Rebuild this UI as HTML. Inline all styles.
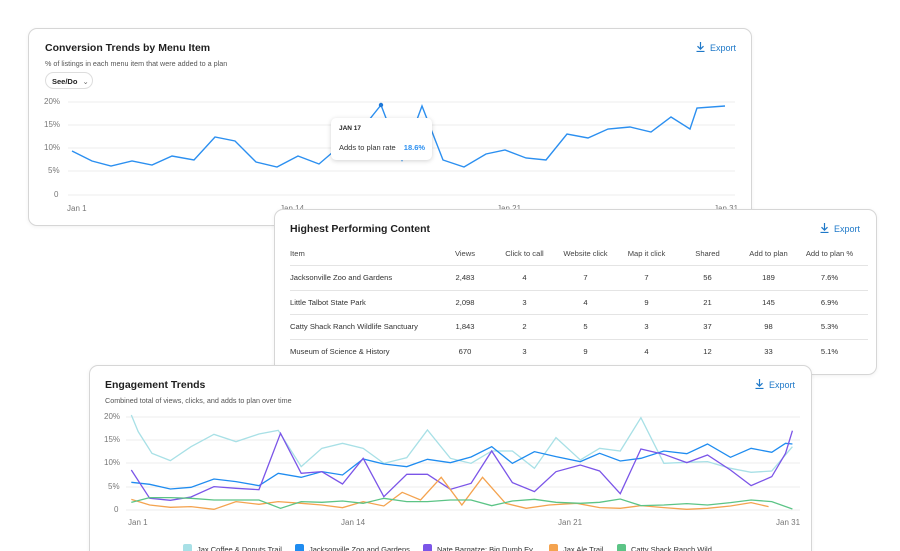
<!DOCTYPE html>
<html><head><meta charset="utf-8"><style>
*{margin:0;padding:0;box-sizing:border-box}
html,body{width:900px;height:551px;overflow:hidden}
body{background:#fff;position:relative;font-family:"Liberation Sans",sans-serif;color:#222}
.card{position:absolute;background:#fff;border:1px solid #d6d6d6;border-radius:9px;box-shadow:0 1px 4px rgba(0,0,0,.06)}
.t{position:absolute;font-size:10.5px;font-weight:bold;color:#1f1f1f;white-space:nowrap}
.s{position:absolute;font-size:7.2px;color:#555;white-space:nowrap}
.exp{position:absolute;font-size:9px;color:#1e78c8;white-space:nowrap}
.exp svg{vertical-align:-1px;margin-right:5px}
.ax{position:absolute;font-size:8px;color:#777;white-space:nowrap}
table{position:absolute;border-collapse:collapse;font-size:7.6px;color:#333;table-layout:fixed}
td,th{font-weight:normal;height:24.5px;text-align:center;border-bottom:1px solid #e4e4e4;white-space:nowrap}
tr:last-child td{border-bottom:none}
th{color:#444}
.l{text-align:left}
</style></head><body>

<div class="card" style="left:28px;top:28px;width:724px;height:198px">
<div class="t" style="left:16px;top:13px">Conversion Trends by Menu Item</div>
<div class="s" style="left:16px;top:30px">% of listings in each menu item that were added to a plan</div>
<div style="position:absolute;left:16px;top:43px;width:48px;height:17px;border:1px solid #ddd;border-radius:9px;font-size:7.5px;font-weight:bold;padding:4px 0 0 6px">See/Do <span style="font-weight:normal;color:#666;margin-left:3px">&#8964;</span></div>
<div class="exp" style="left:667px;top:13px"><svg width="9" height="10" viewBox="0 0 9 10"><path d="M4.5 0v7M1.5 4.2l3 3 3-3M0.5 9.5h8" stroke="#1e78c8" stroke-width="1.2" fill="none"/></svg>Export</div>
</div>
<div class="ax" style="left:44px;top:97px">20%</div>
<div class="ax" style="left:44px;top:120px">15%</div>
<div class="ax" style="left:44px;top:143px">10%</div>
<div class="ax" style="left:48px;top:166px">5%</div>
<div class="ax" style="left:54px;top:190px">0</div>
<div class="ax" style="left:67px;top:204px">Jan 1</div>
<div class="ax" style="left:280px;top:204px">Jan 14</div>
<div class="ax" style="left:497px;top:204px">Jan 21</div>
<div class="ax" style="left:714px;top:204px">Jan 31</div>
<svg style="position:absolute;left:0;top:0" width="900" height="551">
<g stroke="#eee" stroke-width="1"><path d="M68 102H735M68 125H735M68 148H735M68 171H735M68 195H735"/></g>
<polyline fill="none" stroke="#2b8ff0" stroke-width="1.4" points="72,151 92,161 111,166 132,161 152,165 172,156 194,160 215,137 235,141 256,162 277,167 298,156 319,164 340,146 361,130 381,105 402,160 422,106 443,160 464,167 486,154 505,150 526,158 546,160 567,134 588,138 608,129 630,127 651,132 671,117 690,129 697,108 725,106"/>
<circle cx="381" cy="105" r="2.2" fill="#1e78d8"/>
</svg>
<div style="position:absolute;left:331px;top:118px;width:101px;height:42px;background:#fff;border-radius:5px;box-shadow:0 1px 5px rgba(0,0,0,.18)">
<div style="position:absolute;left:8px;top:7px;font-size:6.5px;font-weight:bold">JAN 17</div>
<div style="position:absolute;left:8px;top:25px;font-size:7.5px;color:#333">Adds to plan rate <span style="color:#2b8ff0;font-weight:bold;margin-left:6px">18.6%</span></div>
</div>

<div class="card" style="left:274px;top:209px;width:603px;height:166px">
<div class="t" style="left:15px;top:13px">Highest Performing Content</div>
<div class="exp" style="left:545px;top:13px"><svg width="9" height="10" viewBox="0 0 9 10"><path d="M4.5 0v7M1.5 4.2l3 3 3-3M0.5 9.5h8" stroke="#1e78c8" stroke-width="1.2" fill="none"/></svg>Export</div>
<table style="left:15px;top:31px;width:578px">
<colgroup><col style="width:155px"><col style="width:49px"><col style="width:61px"><col style="width:61px"><col style="width:61px"><col style="width:61px"><col style="width:61px"><col style="width:69px"></colgroup>
<tr><th class="l">Item</th><th style="padding-right:9px">Views</th><th>Click to call</th><th>Website click</th><th>Map it click</th><th>Shared</th><th>Add to plan</th><th style="padding-right:8px">Add to plan %</th></tr>
<tr><td class="l">Jacksonville Zoo and Gardens</td><td style="padding-right:9px">2,483</td><td>4</td><td>7</td><td>7</td><td>56</td><td>189</td><td style="padding-right:8px">7.6%</td></tr>
<tr><td class="l">Little Talbot State Park</td><td style="padding-right:9px">2,098</td><td>3</td><td>4</td><td>9</td><td>21</td><td>145</td><td style="padding-right:8px">6.9%</td></tr>
<tr><td class="l">Catty Shack Ranch Wildlife Sanctuary</td><td style="padding-right:9px">1,843</td><td>2</td><td>5</td><td>3</td><td>37</td><td>98</td><td style="padding-right:8px">5.3%</td></tr>
<tr><td class="l">Museum of Science &amp; History</td><td style="padding-right:9px">670</td><td>3</td><td>9</td><td>4</td><td>12</td><td>33</td><td style="padding-right:8px">5.1%</td></tr>
</table>
</div>

<div class="card" style="left:89px;top:365px;width:723px;height:240px">
<div class="t" style="left:15px;top:13px">Engagement Trends</div>
<div class="s" style="left:15px;top:30px">Combined total of views, clicks, and adds to plan over time</div>
<div class="exp" style="left:665px;top:13px"><svg width="9" height="10" viewBox="0 0 9 10"><path d="M4.5 0v7M1.5 4.2l3 3 3-3M0.5 9.5h8" stroke="#1e78c8" stroke-width="1.2" fill="none"/></svg>Export</div>
</div>
<div class="ax" style="left:104px;top:412px">20%</div>
<div class="ax" style="left:104px;top:435px">15%</div>
<div class="ax" style="left:104px;top:458px">10%</div>
<div class="ax" style="left:108px;top:482px">5%</div>
<div class="ax" style="left:114px;top:505px">0</div>
<div class="ax" style="left:128px;top:518px">Jan 1</div>
<div class="ax" style="left:341px;top:518px">Jan 14</div>
<div class="ax" style="left:558px;top:518px">Jan 21</div>
<div class="ax" style="left:776px;top:518px">Jan 31</div>
<svg style="position:absolute;left:0;top:0" width="900" height="551">
<g stroke="#eee"><path d="M126 417H800M126 440H800M126 463H800M126 487H800M126 510H800"/></g>
<g transform="translate(90 365) scale(0.4591 0.3333)" fill="none" stroke-width="1.3">
<polyline vector-effect="non-scaling-stroke" stroke="#a8e0e6" points="90,150 105,200 135,265 175,287 220,245 270,208 318,230 368,207 410,196 460,305 505,250 550,235 595,250 640,295 690,278 735,195 785,280 830,295 875,258 920,258 968,310 1015,218 1068,285 1110,250 1155,258 1200,158 1250,295 1300,292 1345,290 1395,310 1440,322 1485,318 1530,245"/>
<polyline vector-effect="non-scaling-stroke" stroke="#1f8cf0" points="90,352 130,358 175,372 220,367 270,342 318,350 368,362 410,325 460,337 505,320 550,330 595,282 640,297 690,305 735,283 785,293 830,276 875,245 920,295 968,260 1015,275 1068,290 1110,265 1155,288 1200,280 1250,258 1300,266 1345,237 1395,277 1440,250 1485,262 1515,235 1530,237"/>
<polyline vector-effect="non-scaling-stroke" stroke="#7b55e8" points="90,315 130,400 175,406 220,396 270,365 318,370 368,374 415,205 460,325 505,320 550,357 595,280 640,395 690,328 735,328 785,373 830,355 875,258 920,353 968,380 1015,320 1068,300 1110,318 1155,386 1200,252 1250,268 1300,293 1345,270 1395,315 1440,362 1485,335 1515,265 1530,197"/>
<polyline vector-effect="non-scaling-stroke" stroke="#f4a34f" points="90,403 130,420 175,427 220,425 270,433 318,410 368,418 410,410 460,415 505,420 550,428 595,410 640,423 680,382 720,405 765,337 810,420 855,337 905,415 950,430 1000,420 1060,415 1110,428 1155,430 1200,422 1250,428 1300,433 1345,430 1395,423 1440,413 1478,425"/>
<polyline vector-effect="non-scaling-stroke" stroke="#5cc486" points="90,412 130,398 175,398 220,400 270,405 318,405 368,405 415,430 460,410 505,412 550,408 595,415 640,400 690,410 735,410 785,405 830,405 875,422 920,408 968,403 1015,412 1068,415 1110,412 1155,402 1200,422 1250,420 1300,416 1345,420 1395,413 1440,405 1485,410 1530,432"/>
</g>
<g font-family="Liberation Sans, sans-serif" font-size="7.5" fill="#333">
<rect x="183" y="544" width="9" height="9" rx="2" fill="#a8e0e6"/><text x="197" y="552">Jax Coffee &amp; Donuts Trail</text>
<rect x="295" y="544" width="9" height="9" rx="2" fill="#1f8cf0"/><text x="309" y="552">Jacksonville Zoo and Gardens</text>
<rect x="423" y="544" width="9" height="9" rx="2" fill="#7b55e8"/><text x="437" y="552">Nate Bargatze: Big Dumb Ev...</text>
<rect x="549" y="544" width="9" height="9" rx="2" fill="#f4a34f"/><text x="563" y="552">Jax Ale Trail</text>
<rect x="617" y="544" width="9" height="9" rx="2" fill="#5cc486"/><text x="631" y="552">Catty Shack Ranch Wild...</text>
</g>
</svg>
</body></html>
